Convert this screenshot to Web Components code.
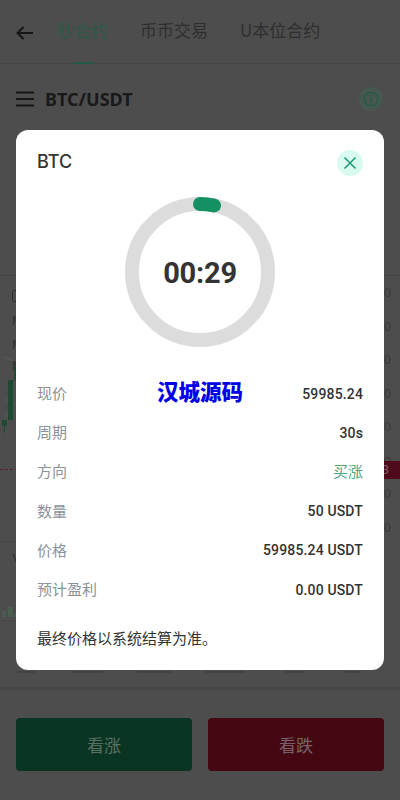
<!DOCTYPE html>
<html lang="zh">
<head>
<meta charset="utf-8">
<title>BTC</title>
<style>
  html, body { margin: 0; height: 100%; background: #4d4d4d; }
  body { font-family: "Noto Sans CJK SC", "Noto Sans", sans-serif; overflow: hidden; }
</style>
</head>
<body>
<trade-page>
  <top-tabs></top-tabs>
  <pair-bar pair="BTC/USDT"></pair-bar>
  <chart-panel></chart-panel>
  <period-strip></period-strip>
  <trade-buttons></trade-buttons>
</trade-page>

<modal-layer>
  <order-modal title="BTC" note="最终价格以系统结算为准。">
    <count-ring time="00:29"></count-ring>
    <info-row label="现价" value="59985.24"></info-row>
    <info-row label="周期" value="30s"></info-row>
    <info-row label="方向" value="买涨" tone="up"></info-row>
    <info-row label="数量" value="50 USDT"></info-row>
    <info-row label="价格" value="59985.24 USDT"></info-row>
    <info-row label="预计盈利" value="0.00 USDT"></info-row>
  </order-modal>
</modal-layer>

<script>
const CJK = '"Noto Sans CJK SC", "Noto Sans", sans-serif';
const NUM = 'Roboto, "Noto Sans CJK SC", sans-serif';

// small helper so each element only has to hand over its template
class Base extends HTMLElement {
  constructor(html) {
    super();
    this.attachShadow({ mode: 'open' });
    this.shadowRoot.innerHTML = html;
  }
}

customElements.define('trade-page', class extends Base {
  constructor() {
    super(`<style>
      :host { display: flex; flex-direction: column; height: 800px; background: #4d4d4d; }
    </style><slot></slot>`);
  }
});

customElements.define('top-tabs', class extends Base {
  constructor() {
    super(`<style>
      :host { display: flex; align-items: stretch; height: 63px; padding-left: 16px; border-bottom: 1px solid #444;
              font: 400 17px/1 ${CJK}; color: #2f2f2f; }
      svg { align-self: center; margin: 2px 24px 0 0; }
      .tab { display: flex; align-items: center; padding-bottom: 5px; margin-right: 32px; position: relative; }
      .on { color: #2c5a46; }
      .on::after { content: ""; position: absolute; left: 16px; width: 20px; height: 2px; bottom: -1px; background: #245a43; }
    </style>
    <svg width="17" height="14" viewBox="0 0 17 14" fill="none" stroke="#161616" stroke-width="2"><path d="M17 7H1.5M7.5 1L1.5 7l6 6"/></svg>
    <div class="tab on">秒合约</div>
    <div class="tab">币币交易</div>
    <div class="tab">U本位合约</div>`);
  }
});

customElements.define('pair-bar', class extends Base {
  constructor() {
    super(`<style>
      :host { display: flex; align-items: center; height: 70px; padding: 0 17px 0 16px; box-sizing: border-box; }
      .name { font: 700 18px/1 "Noto Sans", sans-serif; color: #191919; margin: -1px 0 0 11px; flex: 1; }
      .info { width: 24px; height: 24px; border-radius: 50%; background: #46584f; display: grid; place-items: center; }
    </style>
    <svg width="18" height="16" viewBox="0 0 18 16" fill="none" stroke="#161616" stroke-width="2"><path d="M0 1.5h18M0 8h18M0 14.5h18"/></svg>
    <div class="name"></div>
    <div class="info"><svg width="16" height="16" viewBox="0 0 16 16" fill="none" stroke="#1d5a41" stroke-width="1.1"><circle cx="8" cy="8" r="6.8"/><path d="M8 7v5M8 4v1.4"/></svg></div>`);
  }
  connectedCallback() {
    this.shadowRoot.querySelector('.name').textContent = this.getAttribute('pair');
  }
});

customElements.define('chart-panel', class extends Base {
  constructor() {
    // the sixth label is nearly all behind the price tag: only a sliver of its top shows
    const labels = Array.from({ length: 8 }, (_, i) => i === 5 ? '<span class="cut"><i></i></span>' : '<span>0</span>').join('');
    super(`<style>
      :host { display: block; position: relative; height: 346px; margin-top: 141px; border-top: 1px solid #444; box-sizing: border-box; }
      .axis { display: flex; flex-direction: column; align-items: flex-end; padding-right: 9px; font: 400 13px/33.5px ${NUM}; color: #3b3b3b; }
      span { height: 33.5px; }
      .cut i { display: block; width: 5px; height: 3px; margin-top: 13.5px; border: 1px solid #3b3b3b; border-bottom: 0; border-radius: 4px 4px 0 0; }
      svg { position: absolute; left: 0; top: 0; }
      .mark { position: absolute; left: 12px; font: 400 13px/1 ${NUM}; color: #333; }
      .tag { position: absolute; right: 0; top: 185px; width: 40px; height: 18px; background: #4f0b1b; color: #7b5a62;
             font: 400 13px/18px ${NUM}; text-align: right; padding-right: 11px; box-sizing: border-box; }
      .dash { position: absolute; left: 0; right: 16px; top: 193px; border-top: 1px dashed #5e2030; }
    </style>
    <div class="axis">${labels}</div>
    <svg width="40" height="346" viewBox="0 0 40 346" fill="none">
      <rect x="12.5" y="14.5" width="8" height="11" rx="1" stroke="#2e2e2e"/>
      <path d="M4 81l12 5M4 124h10M5 141l12-16" stroke="#5c5c50"/>
      <path d="M4.5 149v8M15 85v20" stroke="#1d4a33"/>
      <rect x="2" y="144" width="5" height="6" fill="#1d4a33"/>
      <rect x="8" y="104" width="5" height="40" fill="#1d4a33"/>
      <rect x="14" y="91" width="2" height="13" fill="#1d4a33"/>
      <path d="M0 266h40" stroke="#474747"/>
      <rect x="2" y="335" width="4" height="6" fill="#4a5d50"/>
      <rect x="8" y="331" width="5" height="10" fill="#4a5d50"/>
      <rect x="14" y="338" width="2" height="3" fill="#4a5d50"/>
      <path d="M0 345h40" stroke="#474747"/>
    </svg>
    <div class="mark" style="top:38px">M</div>
    <div class="mark" style="top:62px">M</div>
    <div class="mark" style="top:83px">M</div>
    <div class="mark" style="top:275px">V</div>
    <div class="dash"></div>
    <div class="tag">3</div>`);
  }
});

// only the bottoms of these labels peek out below the modal
customElements.define('period-strip', class extends Base {
  constructor() {
    const widths = [[17, 18], [72, 31], [137, 35], [205, 40], [285, 20], [345, 15]];
    const bits = widths.map(([x, w], i) =>
      `<i style="width:${w}px;margin-left:${i ? x - widths[i - 1][0] - widths[i - 1][1] : x}px"></i>`).join('');
    super(`<style>
      :host { display: flex; height: 69px; padding-top: 50px; box-sizing: border-box; border-bottom: 3px solid #464646; }
      i { display: block; height: 2px; background: #434343; }
    </style>${bits}`);
  }
});

customElements.define('trade-buttons', class extends Base {
  constructor() {
    super(`<style>
      :host { display: flex; gap: 16px; padding: 28px 16px 0; font: 400 17px/53px ${CJK}; }
      div { flex: 1; height: 53px; border-radius: 4px; text-align: center; }
      .up { background: #0a3522; color: #5a7065; }
      .down { background: #450813; color: #78606a; }
    </style><div class="up">看涨</div><div class="down">看跌</div>`);
  }
});

customElements.define('modal-layer', class extends Base {
  constructor() {
    super(`<style>
      :host { position: fixed; inset: 0; display: flex; align-items: center; justify-content: center; }
    </style><slot></slot>`);
  }
});

customElements.define('order-modal', class extends Base {
  constructor() {
    super(`<style>
      :host { display: block; position: relative; width: 368px; height: 540px; box-sizing: border-box; padding: 20px 21px 0;
              background: #fff; border-radius: 12px; }
      header { display: flex; justify-content: space-between; align-items: center; height: 26px; }
      h2 { margin: 0; font: 500 18px/1 Inter, Roboto, sans-serif; color: #333; position: relative; top: -1px; }
      .close { width: 26px; height: 26px; border-radius: 50%; background: #d9fbef; display: grid; place-items: center; }
      .note { margin-top: 19px; font: 400 15px/22px ${CJK}; color: #333; }
      .mark { position: absolute; left: 141px; top: 246px; font: 900 21.5px/30px ${CJK}; color: #0000e6; }
    </style>
    <header><h2></h2>
      <div class="close"><svg width="14" height="14" viewBox="0 0 14 14" fill="none" stroke="#1c9a6e" stroke-width="1.5"><path d="M1.5 1.5l11 11M12.5 1.5l-11 11"/></svg></div>
    </header>
    <slot></slot>
    <div class="note"></div>
    <div class="mark">汉城源码</div>`);
  }
  connectedCallback() {
    this.shadowRoot.querySelector('h2').textContent = this.getAttribute('title');
    this.shadowRoot.querySelector('.note').textContent = this.getAttribute('note');
  }
});

customElements.define('count-ring', class extends Base {
  constructor() {
    super(`<style>
      :host { display: grid; place-items: center; width: 150px; height: 150px; margin: 21px auto 26px; }
      svg, .time { grid-area: 1 / 1; }
      .time { font: 700 29px/1 ${NUM}; color: #333; letter-spacing: -.2px; padding-top: 2px; }
    </style>
    <svg width="150" height="150" viewBox="0 0 150 150" fill="none" stroke-width="14">
      <circle cx="75" cy="75" r="68" stroke="#dcdcdc"/>
      <path d="M75 7A68 68 0 0 1 89 8.5" stroke="#149062" stroke-linecap="round"/>
    </svg>
    <div class="time"></div>`);
  }
  connectedCallback() {
    this.shadowRoot.querySelector('.time').textContent = this.getAttribute('time');
  }
});

customElements.define('info-row', class extends Base {
  constructor() {
    super(`<style>
      :host { display: flex; justify-content: space-between; align-items: center; height: 39.2px; }
      .label { font: 400 15px/1 ${CJK}; color: #8b929c; }
      .value { font: 500 14px/1 ${NUM}; color: #333; letter-spacing: .15px; padding-top: 2px; }
      .up { font: 400 15px/1 ${CJK}; color: #4aa586; letter-spacing: 0; padding-top: 0; }
    </style><div class="label"></div><div class="value"></div>`);
  }
  connectedCallback() {
    this.shadowRoot.querySelector('.label').textContent = this.getAttribute('label');
    const value = this.shadowRoot.querySelector('.value');
    value.textContent = this.getAttribute('value');
    if (this.getAttribute('tone') === 'up') value.classList.add('up');
  }
});
</script>
</body>
</html>
